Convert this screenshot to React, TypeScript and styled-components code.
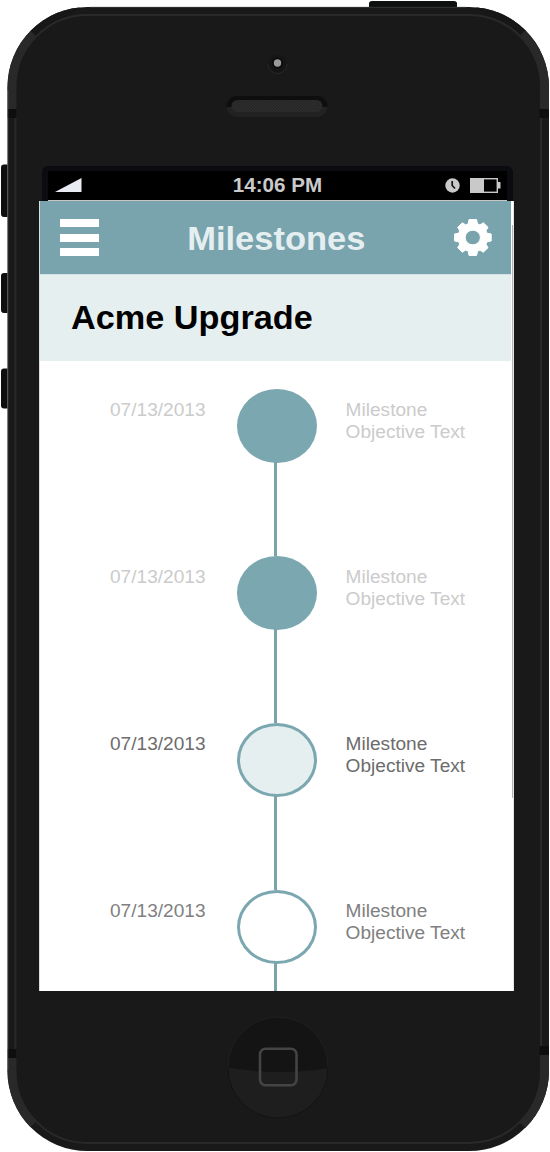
import React from "react";
import styled, { createGlobalStyle } from "styled-components";

const GlobalStyle = createGlobalStyle`
  * { box-sizing: border-box; }
  body {
    margin: 0;
    background: #fff;
    font-family: "Liberation Sans", Arial, sans-serif;
  }
`;

const Device = styled.main`
  position: relative;
  width: 550px;
  height: 1152px;
  padding: 166px 36px 0 39px;
  display: flex;
  flex-direction: column;
  overflow: hidden;
`;

const Casing = styled.svg`
  position: absolute;
  inset: 0;
  z-index: -1;
`;

const StatusFrame = styled.div`
  height: 35px;
  flex: none;
  margin: 0 1px 0 3px;
  padding: 5px 6px 0;
  background: #0b0c10;
  border-radius: 6px 6px 0 0;
`;

const StatusBar = styled.div`
  height: 30px;
  display: grid;
  grid-template-columns: 1fr auto 1fr;
  align-items: center;
  padding: 0 7px 1px 7px;
  background: #000;
  border-bottom: 1px solid #c9c8c4;
`;

const Clock = styled.time`
  margin-bottom: 1px;
  color: #cacaca;
  font-size: 20.6px;
  font-weight: 700;
  line-height: 24px;
`;

const StatusIcons = styled.div`
  display: flex;
  align-items: center;
  justify-content: flex-end;
  gap: 10px;
  margin-right: -1px;
`;

const Screen = styled.section`
  height: 790px;
  flex: none;
  display: flex;
  flex-direction: column;
  position: relative;
  background: #fff;
  border-left: 1px solid #dcdcdc;
  border-right: 1px solid #e6e6e6;
  overflow: hidden;
`;

const ScrollThumb = styled.div`
  position: absolute;
  top: 24px;
  right: 0;
  width: 1px;
  height: 573px;
  background: #b4b4b4;
`;

const Header = styled.header`
  height: 73px;
  flex: none;
  margin-right: 2px;
  padding: 0 19px 0 20px;
  display: flex;
  align-items: center;
  justify-content: space-between;
  background: #79a3ad;
`;

const MenuButton = styled.button`
  width: 39px;
  height: 37px;
  padding: 0;
  border: 0;
  background: none;
  display: flex;
  flex-direction: column;
  justify-content: space-between;
`;

const MenuBar = styled.span`
  height: 8px;
  width: 39px;
  background: #fff;
`;

const Title = styled.h1`
  margin: 3px 0 0 -1px;
  font-size: 33px;
  line-height: 40px;
  color: #e5eff1;
  transform: scaleX(1.045);
`;

const Project = styled.div`
  height: 87px;
  flex: none;
  margin-right: 2px;
  padding: 24px 31px 0;
  background: #e5eff0;
  border-top: 1px solid #d3e2e4;
`;

const ProjectName = styled.h2`
  margin: 0;
  font-size: 33px;
  line-height: 38px;
  color: #000;
  transform: scaleX(1.038);
  transform-origin: left;
`;

const Timeline = styled.ol`
  list-style: none;
  margin: 0;
  padding: 28px 0 0 70px;
`;

const Milestone = styled.li<{ $color: string }>`
  height: 167px;
  display: grid;
  grid-template-columns: 127px 80px 1fr;
  color: ${(p) => p.$color};
  font-size: 18px;
  line-height: 22px;
`;

const Label = styled.span`
  display: block;
  padding-top: 10px;
  white-space: nowrap;
  transform: scaleX(1.06);
  transform-origin: left;
`;

const Objective = styled(Label)`
  padding-left: 27px;
`;

const Track = styled.div`
  display: flex;
  flex-direction: column;
`;

const Marker = styled.div<{ $fill: string }>`
  width: 80px;
  height: 74px;
  flex: none;
  border: 3px solid #7ba7b0;
  border-radius: 50%;
  background: ${(p) => p.$fill};
`;

const Connector = styled.div`
  flex: 1;
  width: 3px;
  margin: -1px 0 0 37px;
  background: #7ba3ac;
`;

const milestones = [
  { fill: "#7ba7b0", color: "#cbcbcb" },
  { fill: "#7ba7b0", color: "#cbcbcb" },
  { fill: "#e5eff0", color: "#6c6c6c" },
  { fill: "#fff", color: "#808080" },
];

function PhoneCasing() {
  return (
    <Casing width="550" height="1152" viewBox="0 0 550 1152" aria-hidden="true">
      <defs>
        <clipPath id="body">
          <rect x="7.5" y="7" width="541.5" height="1144" rx="80" />
        </clipPath>
        <clipPath id="home">
          <circle cx="278" cy="1067.500" r="50.500" />
        </clipPath>
        <pattern id="mesh" width="3" height="3" patternUnits="userSpaceOnUse">
          <rect width="3" height="3" fill="#262626" />
          <path d="M0 3L3 0" stroke="#343434" strokeWidth=".8" />
        </pattern>
      </defs>
      <path d="M369 9V3.500Q369 1 372 1H454Q457 1 457 3.500V9Z" fill="#0d100f" />
      <g fill="#0d100f">
        <rect x="1" y="164.500" width="12" height="52.500" rx="3" />
        <rect x="1" y="273" width="12" height="40" rx="3" />
        <rect x="1" y="368.500" width="12" height="40" rx="3" />
      </g>
      <g clipPath="url(#body)">
        <rect width="550" height="1152" fill="#191919" />
        <path d="M0 0L35 35V109H0ZM550 0L520 35V109H550Z" fill="#292929" />
        <path d="M0 1152V1058H35V1123ZM550 1152V1055H520V1123Z" fill="#292929" />
        <path d="M0 0H90L38 37L30 30ZM550 0H466L518 37L526 30Z" fill="#171717" />
        <path d="M7 109H17V118H7ZM540 109H549V118H540ZM7 1049H17V1058H7ZM540 1046H549V1055H540Z" fill="#0e0e0e" />
        <rect x="15.500" y="15" width="525.500" height="1128" rx="72" fill="#191919" stroke="#292929" strokeWidth="2" />
        <path d="M15 109V118M541 109V118M15 1049V1058M541 1046V1055" stroke="#0e0e0e" strokeWidth="3" />
      </g>
      <path d="M7.700 90V1070" stroke="#777" strokeWidth=".8" />
      <path d="M90 7.300H466" stroke="#444" strokeWidth=".7" />
      <circle cx="277.500" cy="64" r="9.500" fill="#151515" />
      <path d="M268 64A9.500 9.500 0 0 0 287 64" fill="none" stroke="#292929" />
      <circle cx="277.500" cy="63" r="5.500" fill="#0c0c0c" />
      <circle cx="277.500" cy="63" r="3.700" fill="#999" />
      <path d="M226.500 107A10.500 10.500 0 0 1 237 96H317A10.500 10.500 0 0 1 327.500 107Z" fill="#0e0e0e" />
      <path d="M226.500 107A10.500 10.500 0 0 0 237 117H317A10.500 10.500 0 0 0 327.500 107Z" fill="#222" />
      <rect x="231.500" y="100" width="91" height="12" rx="6" fill="url(#mesh)" />
      <g clipPath="url(#home)">
        <rect x="225" y="1015" width="110" height="110" fill="#1e1e1e" />
        <path d="M225 1015H335V1067Q278 1077 225 1067Z" fill="#141414" />
      </g>
      <path d="M228 1067A50 50 0 0 1 328 1067" fill="none" stroke="#202020" />
      <path d="M228 1068A50 50 0 0 0 328 1068" fill="none" stroke="#131313" />
      <rect x="260" y="1048.800" width="36.500" height="36.500" rx="5.500" fill="none" stroke="#444" strokeWidth="2.600" />
    </Casing>
  );
}

function SignalIcon() {
  return (
    <svg width="28" height="15" viewBox="0 0 28 15">
      <path d="M0 14L26.500 0V14Z" fill="#e9edf3" />
    </svg>
  );
}

function AlarmIcon() {
  return (
    <svg width="15" height="15" viewBox="0 0 15 15">
      <circle cx="7.500" cy="7.500" r="7.200" fill="#c9c9c9" />
      <path d="M7.200 3V7.500L10 10.500" fill="none" stroke="#111" strokeWidth="1.700" />
    </svg>
  );
}

function BatteryIcon() {
  return (
    <svg width="31" height="15" viewBox="0 0 31 15">
      <rect x=".7" y=".7" width="26.600" height="13.600" fill="none" stroke="#c9c9c9" strokeWidth="1.400" />
      <path d="M0 0H14V15H0ZM28 4H30.500V10.500H28Z" fill="#c9c9c9" />
    </svg>
  );
}

function GearIcon() {
  return (
    <svg width="38" height="37" viewBox="0 0 38 37">
      <path
        fill="#fff"
        stroke="#fff"
        strokeWidth="1"
        strokeLinejoin="round"
        fillRule="evenodd"
        d="M15 .6H22.600L23.500 4.800L26 5.900L29.300 3.800L34 8.300L32 11.800L33 14.200L37.200 15V22L33 22.800L32 25.200L34 28.700L29.300 33.200L26 31.100L23.500 32.200L22.600 36.400H15L14.200 32.200L11.700 31.100L8.400 33.200L3.700 28.700L5.700 25.200L4.700 22.800L.5 22V15L4.700 14.200L5.700 11.800L3.700 8.300L8.400 3.800L11.700 5.900L14.200 4.800ZM18.800 11.200A7.600 7.300 0 1 0 18.800 25.800A7.600 7.300 0 1 0 18.800 11.200Z"
      />
    </svg>
  );
}

export default function App() {
  return (
    <>
      <GlobalStyle />
      <Device>
        <PhoneCasing />
        <StatusFrame>
          <StatusBar>
            <SignalIcon />
            <Clock>14:06 PM</Clock>
            <StatusIcons>
              <AlarmIcon />
              <BatteryIcon />
            </StatusIcons>
          </StatusBar>
        </StatusFrame>
        <Screen>
          <Header>
            <MenuButton aria-label="Menu">
              <MenuBar />
              <MenuBar />
              <MenuBar />
            </MenuButton>
            <Title>Milestones</Title>
            <GearIcon />
          </Header>
          <Project>
            <ProjectName>Acme Upgrade</ProjectName>
          </Project>
          <Timeline>
            {milestones.map((m, i) => (
              <Milestone key={i} $color={m.color}>
                <Label>07/13/2013</Label>
                <Track>
                  <Marker $fill={m.fill} />
                  <Connector />
                </Track>
                <Objective>
                  Milestone
                  <br />
                  Objective Text
                </Objective>
              </Milestone>
            ))}
          </Timeline>
          <ScrollThumb />
        </Screen>
      </Device>
    </>
  );
}
